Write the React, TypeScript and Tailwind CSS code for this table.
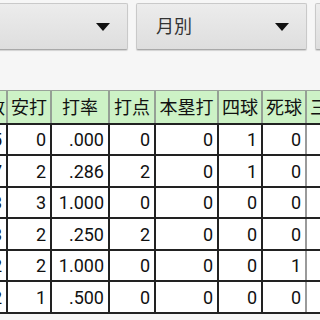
const cols = [
  { w: "w-[40px]", head: "打数" },
  { w: "w-[44px]", head: "安打" },
  { w: "w-[58px]", head: "打率" },
  { w: "w-[46px]", head: "打点" },
  { w: "w-[63px]", head: "本塁打" },
  { w: "w-[44px]", head: "四球" },
  { w: "w-[44px]", head: "死球" },
  { w: "w-[44px]", head: "三振" },
]

const rows = [
  { h: "h-[31px]", v: ["5", "0", ".000", "0", "0", "1", "0", ""] },
  { h: "h-[32px]", v: ["7", "2", ".286", "2", "0", "1", "0", ""] },
  { h: "h-[31px]", v: ["3", "3", "1.000", "0", "0", "0", "0", ""] },
  { h: "h-[32px]", v: ["3", "2", ".250", "2", "0", "0", "0", ""] },
  { h: "h-[31px]", v: ["2", "2", "1.000", "0", "0", "0", "1", ""] },
  { h: "h-[32px]", v: ["2", "1", ".500", "0", "0", "0", "0", ""] },
]

function Spinner({ w, label }: { w: string; label: string }) {
  return (
    <div
      className={`${w} shrink-0 h-[47px] flex items-center justify-between pl-[19px] pr-[17px] rounded-[2px] border border-[#c9c9c9] border-b-[#a9a9a9] bg-gradient-to-b from-[#ececec] to-[#dedede] shadow-[0_1px_1px_rgba(0,0,0,0.15)]`}
    >
      <span className="text-[18px] text-[#333] leading-none">{label}</span>
      <svg width="14" height="8" viewBox="0 0 14 8">
        <path d="M0 0 L14 0 L7 8 Z" fill="#111" />
      </svg>
    </div>
  )
}

export default function App() {
  return (
    <div className="w-[320px] h-[320px] overflow-hidden bg-[#f6f6f6] font-[Roboto,'Noto_Sans_CJK_JP',sans-serif]">
      {/* spinners */}
      <div className="flex gap-2 pt-[3px] -ml-[12px]">
        <Spinner w="w-[140px]" label="" />
        <Spinner w="w-[171px]" label="月別" />
        <Spinner w="w-[100px]" label="" />
      </div>

      {/* table */}
      <div className="mt-[40px] -ml-[32px] w-max">
        <div className="flex h-[35px] bg-[#cdf2c6] border-t border-[#9aa39a] border-b-2 border-b-[#222]">
          {cols.map((c, i) => (
            <div
              key={i}
              className={`${c.w} shrink-0 flex items-center justify-center border-r-2 border-[#95a095] text-[18px] text-[#111] whitespace-nowrap overflow-hidden`}
            >
              {c.head}
            </div>
          ))}
        </div>
        {rows.map((r, ri) => (
          <div key={ri} className={`flex ${r.h} bg-white border-b-2 border-[#222]`}>
            {cols.map((c, i) => (
              <div
                key={i}
                className={`${c.w} shrink-0 flex items-center justify-end pr-[4px] border-r-2 text-[18px] text-[#111] ${i === 6 ? "border-[#9a9a9a]" : "border-[#222]"}`}
              >
                {r.v[i]}
              </div>
            ))}
          </div>
        ))}
      </div>
    </div>
  )
}
